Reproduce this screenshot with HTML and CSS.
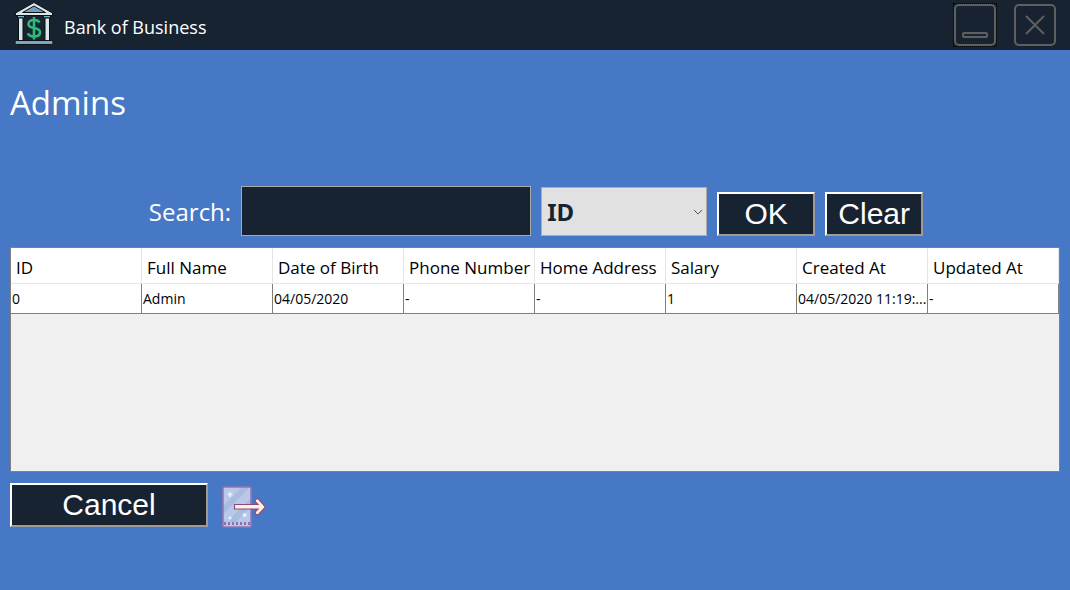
FILE: index.html
```html
<!DOCTYPE html>
<html lang="en">
<head>
<meta charset="utf-8">
<title>Bank of Business</title>
<link rel="stylesheet" href="styles.css">
</head>
<body>
<header class="titlebar">
  <svg class="logo" viewBox="0 0 40 44" aria-hidden="true">
    <g stroke="#0b1118" stroke-width="1">
      <path d="M20 1.500 38.500 12v2.500h-37V12z" fill="#dde6e6"/>
      <path d="M20 5 31.500 11.500h-23z" fill="#6f9fb8"/>
      <path d="M3.500 14.500h7v2.500h-7zM29.500 14.500h7v2.500h-7z" fill="#7fb0c4"/>
      <path d="M4.500 17h4.500v23H4.500zM31 17h4.500v23h-4.500z" fill="#dde6e6"/>
      <rect x="1" y="39.500" width="38" height="4" rx="1.500" fill="#7aa9bd"/>
    </g>
    <path d="M25.500 21.500c-1-2-3-2.500-5.500-2.500-3.500 0-5.500 1.500-5.500 4s2 3.500 5.500 4c3.800.6 6 1.700 6 4.300s-2.500 4.200-6 4.200c-3 0-5.300-1-6.200-3.200M20 16v22.500" fill="none" stroke="#2fb978" stroke-width="2.600"/>
  </svg>
  <span class="app-name">Bank of Business</span>
  <div class="window-buttons">
    <button class="window-button focused" type="button" aria-label="Minimize">
      <svg viewBox="0 0 42 42"><rect x="1" y="1" width="40" height="40" rx="4"/><rect x="9" y="29" width="24" height="4" rx="1"/></svg>
    </button>
    <button class="window-button" type="button" aria-label="Close">
      <svg viewBox="0 0 42 42"><rect x="1" y="1" width="40" height="40" rx="4"/><path d="M12 12l18 18M30 12 12 30"/></svg>
    </button>
  </div>
</header>
<main class="page">
  <h1 class="title">Admins</h1>
  <form class="search">
    <label class="search-label" for="query">Search:</label>
    <input class="search-input" id="query" type="text">
    <div class="picker">
      <select class="picker-select" aria-label="Search field">
        <option>ID</option>
        <option>Full Name</option>
        <option>Salary</option>
      </select>
      <svg class="picker-arrow" viewBox="0 0 10 6" aria-hidden="true"><path d="M1 1l4 4 4-4"/></svg>
    </div>
    <button class="button" type="button">OK</button>
    <button class="button" type="button">Clear</button>
  </form>
  <div class="grid">
    <table class="table">
      <thead>
        <tr><th>ID</th><th>Full Name</th><th>Date of Birth</th><th>Phone Number</th><th>Home Address</th><th>Salary</th><th>Created At</th><th>Updated At</th></tr>
      </thead>
      <tbody>
        <tr><td>0</td><td>Admin</td><td>04/05/2020</td><td>-</td><td>-</td><td>1</td><td>04/05/2020 11:19:...</td><td>-</td></tr>
      </tbody>
    </table>
  </div>
  <div class="actions">
    <button class="button wide" type="button">Cancel</button>
    <button class="export" type="button" aria-label="Export">
      <svg viewBox="0 0 44 42">
        <rect x="1" y="1" width="28" height="40" fill="#b8c8e8"/>
        <path d="M1 20 20 1h8L1 28zM8 33 29 12v9L14 36H8z" fill="#a8bbe0"/>
        <path d="M3 39v-3M7 39v-3M11 39v-3M15 39v-3M19 39v-3M23 39v-3M27 39v-3" stroke="#7a55a0" stroke-width="1.500"/>
        <rect x="1" y="1" width="28" height="40" rx="1" fill="none" stroke="#9873ae" stroke-width="1.500"/>
        <path d="M8 6v5M5.500 8.500h5M22.500 27v4M20.500 29h4M8 30.500v3M6.500 32h3" stroke="#eef3fd" stroke-width="1.500"/>
        <path d="M12.500 18.500H36l-2.500-2.500c-1-2 1-4 3-3l7 8-7 7.500c-2 1-4-1-3-3l2.500-2.500H12.500z" fill="#fff1dd" stroke="#8b4a80" stroke-width="1.200"/>
      </svg>
    </button>
  </div>
</main>
</body>
</html>
```
FILE: styles.css
```css
* { box-sizing: border-box; }

body {
  margin: 0;
  min-height: 100vh;
  background: #4678c6;
  color: #fff;
  font-family: "Open Sans", "Noto Sans", sans-serif;
}

button { padding: 0; font: inherit; color: inherit; }

.titlebar {
  display: flex;
  align-items: center;
  height: 50px;
  padding: 0 14px;
  background: #182332;
}

.logo { width: 40px; height: 44px; margin-bottom: 4px; }

.app-name { margin: 4px 0 0 10px; font-size: 18px; line-height: 24px; }

.window-buttons { display: flex; gap: 18px; margin-left: auto; }

.window-button {
  width: 42px;
  height: 42px;
  border: 0;
  background: none;
}

.window-button.focused { outline: 1px dotted #000; }

.window-button svg {
  display: block;
  fill: none;
  stroke: #5f5f5f;
  stroke-width: 2;
}

.page { padding: 28px 10px 0; }

.title { margin: 0; font-size: 33px; font-weight: 400; line-height: 50px; }

.search {
  display: flex;
  align-items: flex-end;
  justify-content: center;
  gap: 10px;
  margin-top: 58px;
  padding-left: 2px;
}

.search-label { font-size: 24px; line-height: 48px; }

.search-input {
  width: 290px;
  height: 50px;
  padding: 0 6px;
  border: 1px solid #a9a9a9;
  background: #182332;
  color: #fff;
  font: inherit;
  font-size: 24px;
}

.picker { position: relative; }

.picker-select {
  appearance: none;
  display: block;
  width: 166px;
  height: 49px;
  padding: 0 5px;
  border: 1px solid #adadad;
  border-radius: 0;
  background: #e1e1e1;
  color: #182332;
  font-family: "Noto Sans", sans-serif;
  font-size: 24px;
  font-weight: 700;
}

.picker-arrow {
  position: absolute;
  top: 22px;
  right: 4px;
  width: 10px;
  height: 6px;
  fill: none;
  stroke: #555;
}

.button {
  width: 98px;
  height: 44px;
  border: 2px solid;
  border-color: #fff #a09a94 #a09a94 #fff;
  background: #182332;
  font-family: "Liberation Sans", Arial, sans-serif;
  font-size: 30px;
  line-height: 40px;
}

.button.wide { width: 198px; }

.grid {
  height: 225px;
  margin-top: 11px;
  border: 1px solid #808080;
  background: #f0f0f0;
  color: #000;
}

.table { width: 100%; table-layout: fixed; border-collapse: separate; border-spacing: 0; background: #fff; }

.table th {
  height: 36px;
  padding: 5px 0 0 5px;
  border-right: 1px solid #e5e5e5;
  border-bottom: 1px solid #e5e5e5;
  font-size: 17px;
  font-weight: 400;
  line-height: 24px;
  text-align: left;
  white-space: nowrap;
}

.table td {
  height: 30px;
  padding: 0 0 0 1px;
  border-right: 1px solid #808080;
  border-bottom: 1px solid #808080;
  font-size: 14px;
  line-height: 20px;
  white-space: nowrap;
}

.actions { display: flex; align-items: flex-start; gap: 14px; margin-top: 11px; }

.export { width: 44px; height: 42px; margin-top: 3px; border: 0; background: none; }

.export svg { display: block; }
```
